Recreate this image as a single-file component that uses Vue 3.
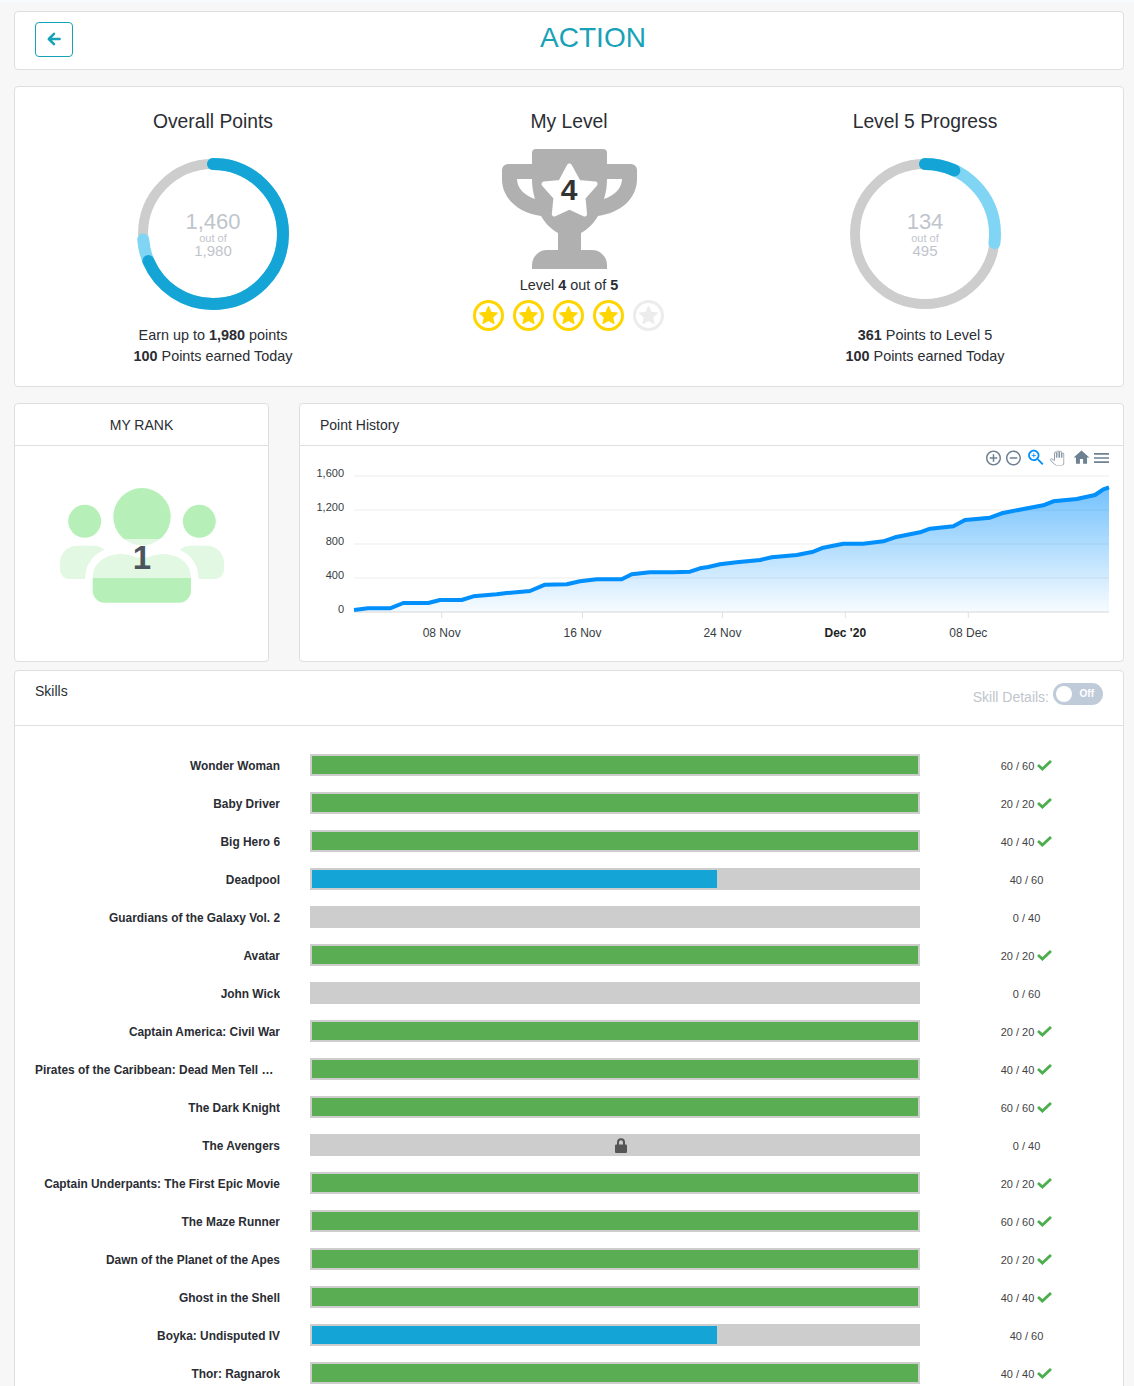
<script setup>
const zoomB = [[0,305],[30,295],[55,291],[90,283],[140,277],[210,270],[245,262],[320,255],[370,245],[400,233],[460,221],[520,221],[580,214],[615,202],[690,187],[720,176],[790,169],[825,150],[900,143],[935,130],[985,120],[1060,106],[1090,94],[1160,87],[1215,75],[1240,58],[1257,52]]
const first = [[354,610],[368,608.3],[390,608.3],[403.3,603],[428.3,603],[440,600],[461.7,600],[473.3,596.3],[496.7,594.3],[506.7,593],[530,591],[545,584.7],[566.7,584.3],[580,581.3],[596.7,579.3],[621.7,579.3],[631.7,574.3],[650,572.3],[673.3,572.3]]
const second = zoomB.map(([x, y]) => [+(690 + x / 3).toFixed(1), +(470 + y / 3).toFixed(1)])
const pts = [...first, ...second]
const linePath = 'M' + pts.map(p => p.join(',')).join(' L')
const areaPath = linePath + ' L1109,612 L354,612 Z'

const grid = [
  { y: 476, label: '1,600' },
  { y: 510, label: '1,200' },
  { y: 544, label: '800' },
  { y: 578, label: '400' },
  { y: 612, label: '0' }
]
const ticks = [
  { x: 441.7, label: '08 Nov' },
  { x: 582.5, label: '16 Nov' },
  { x: 722.4, label: '24 Nov' },
  { x: 845.3, label: "Dec '20", bold: true },
  { x: 968.3, label: '08 Dec' }
]
const rings = [
  { title: 'Overall Points', value: '1,460', total: '1,980', light: 73.7, dark: 68.7 },
  { title: 'Level 5 Progress', value: '134', total: '495', light: 27.1, dark: 6.9 }
]
const stars = [true, true, true, true, false]
const skills = [
  { name: 'Wonder Woman', score: '60 / 60', state: 'done' },
  { name: 'Baby Driver', score: '20 / 20', state: 'done' },
  { name: 'Big Hero 6', score: '40 / 40', state: 'done' },
  { name: 'Deadpool', score: '40 / 60', state: 'part' },
  { name: 'Guardians of the Galaxy Vol. 2', score: '0 / 40', state: 'none' },
  { name: 'Avatar', score: '20 / 20', state: 'done' },
  { name: 'John Wick', score: '0 / 60', state: 'none' },
  { name: 'Captain America: Civil War', score: '20 / 20', state: 'done' },
  { name: 'Pirates of the Caribbean: Dead Men Tell No Tales', score: '40 / 40', state: 'done' },
  { name: 'The Dark Knight', score: '60 / 60', state: 'done' },
  { name: 'The Avengers', score: '0 / 40', state: 'locked' },
  { name: 'Captain Underpants: The First Epic Movie', score: '20 / 20', state: 'done' },
  { name: 'The Maze Runner', score: '60 / 60', state: 'done' },
  { name: 'Dawn of the Planet of the Apes', score: '20 / 20', state: 'done' },
  { name: 'Ghost in the Shell', score: '40 / 40', state: 'done' },
  { name: 'Boyka: Undisputed IV', score: '40 / 60', state: 'part' },
  { name: 'Thor: Ragnarok', score: '40 / 40', state: 'done' }
]
</script>

<template>
  <div class="page">
    <section class="card top">
      <button class="back" type="button" aria-label="Back">
        <svg width="14" height="14" viewBox="0 0 14 14">
          <path d="M7 1.8 1.8 7 7 12.2M2 7h10.6" fill="none" stroke="#17a2b8" stroke-width="2.5" stroke-linejoin="round" stroke-linecap="round" />
        </svg>
      </button>
      <h1 class="page-title">ACTION</h1>
    </section>

    <section class="card overview">
      <div class="col">
        <h2 class="col-title">{{ rings[0].title }}</h2>
        <div class="ring">
          <svg width="160" height="160" viewBox="0 0 160 160">
            <circle cx="80" cy="80" r="70" class="ring-track" />
            <circle cx="80" cy="80" r="70" class="ring-arc light" pathLength="100" :stroke-dasharray="`${rings[0].light} 100`" transform="rotate(-90 80 80)" />
            <circle cx="80" cy="80" r="70" class="ring-arc dark" pathLength="100" :stroke-dasharray="`${rings[0].dark} 100`" transform="rotate(-90 80 80)" />
          </svg>
          <div class="ring-text">
            <span class="ring-val">{{ rings[0].value }}</span>
            <span class="ring-of">out of</span>
            <span class="ring-total">{{ rings[0].total }}</span>
          </div>
        </div>
        <p class="note">Earn up to <b>1,980</b> points<br /><b>100</b> Points earned Today</p>
      </div>

      <div class="col">
        <h2 class="col-title">My Level</h2>
        <div class="trophy">
          <svg width="135" height="120" viewBox="0 0 135 120">
            <path fill="#b0b0b0" fill-rule="evenodd" d="M34,0 H101 a4,4 0 0 1 4,4 V15 H129 a6,6 0 0 1 6,6 V30 C135,50 118,64 96,67 C92,74 86,80 79,84 V101 H90 a15,15 0 0 1 15,15 V120 H30 V116 a15,15 0 0 1 15,-15 H56 V84 C49,80 43,74 39,67 C17,64 0,50 0,30 V21 a6,6 0 0 1 6,-6 H30 V4 a4,4 0 0 1 4,-4 Z M15,30 H30 C30,37 31,44 33,50 C24,47 15,40 15,30 Z M120,30 H105 C105,37 104,44 102,50 C111,47 120,40 120,30 Z" />
            <polygon fill="#fff" stroke="#fff" stroke-width="5" stroke-linejoin="round" points="67.4,17 76.5,33.5 93,35 81,48.5 82.5,65 67.4,58 52.3,65 54,48.5 42,35 58.5,33.5" />
          </svg>
          <span class="trophy-num">4</span>
        </div>
        <p class="level-line">Level <b>4</b> out of <b>5</b></p>
        <div class="stars">
          <span v-for="(on, i) in stars" :key="i" class="star" :class="{ off: !on }">
            <svg width="21" height="21" viewBox="0 0 24 24">
              <path d="M12 17.27 18.18 21l-1.64-7.03L22 9.24l-7.19-.61L12 2 9.19 8.63 2 9.24l5.46 4.73L5.82 21z" fill="currentColor" stroke="currentColor" stroke-width="1.6" stroke-linejoin="round" />
            </svg>
          </span>
        </div>
      </div>

      <div class="col">
        <h2 class="col-title">{{ rings[1].title }}</h2>
        <div class="ring">
          <svg width="160" height="160" viewBox="0 0 160 160">
            <circle cx="80" cy="80" r="70" class="ring-track" />
            <circle cx="80" cy="80" r="70" class="ring-arc light" pathLength="100" :stroke-dasharray="`${rings[1].light} 100`" transform="rotate(-90 80 80)" />
            <circle cx="80" cy="80" r="70" class="ring-arc dark" pathLength="100" :stroke-dasharray="`${rings[1].dark} 100`" transform="rotate(-90 80 80)" />
          </svg>
          <div class="ring-text">
            <span class="ring-val">{{ rings[1].value }}</span>
            <span class="ring-of">out of</span>
            <span class="ring-total">{{ rings[1].total }}</span>
          </div>
        </div>
        <p class="note"><b>361</b> Points to Level 5<br /><b>100</b> Points earned Today</p>
      </div>
    </section>

    <div class="middle">
      <section class="card rank">
        <header class="rank-head">MY RANK</header>
        <div class="rank-body">
          <div class="rank-icon">
            <svg width="165" height="116" viewBox="0 0 165 116">
              <defs>
                <linearGradient id="fillLevel" gradientUnits="userSpaceOnUse" x1="0" y1="0" x2="0" y2="116">
                  <stop offset="0" stop-color="#b6f0b8" />
                  <stop offset="0.44" stop-color="#b6f0b8" />
                  <stop offset="0.44" stop-color="#e2f8e3" />
                  <stop offset="0.776" stop-color="#e2f8e3" />
                  <stop offset="0.776" stop-color="#b6f0b8" />
                  <stop offset="1" stop-color="#b6f0b8" />
                </linearGradient>
              </defs>
              <circle cx="24.7" cy="33.3" r="16.5" fill="#b6f0b8" />
              <circle cx="139.3" cy="33.3" r="16.5" fill="#b6f0b8" />
              <path fill="#e2f8e3" d="M17,57.7 H34 C38,57.7 41,59 44,61.5 V91 H9 a9,9 0 0 1 -9,-9 V74.7 a17,17 0 0 1 17,-17 Z" />
              <path fill="#e2f8e3" d="M147,57.7 H130 C126,57.7 123,59 120,61.5 V91 H155 a9,9 0 0 0 9,-9 V74.7 a17,17 0 0 0 -17,-17 Z" />
              <path fill="url(#fillLevel)" stroke="#fff" stroke-width="15" paint-order="stroke" d="M32.7,90 C32.7,75 45,66 62,66 C70,66 75,70 82,70 C89,70 94,66 102,66 C119,66 131,75 131,90 V102.7 a12,12 0 0 1 -12,12 H44.7 a12,12 0 0 1 -12,-12 Z" />
              <circle cx="82" cy="28.7" r="28.7" fill="url(#fillLevel)" />
            </svg>
            <span class="rank-num">1</span>
          </div>
        </div>
      </section>

      <section class="card history">
        <header class="history-head">Point History</header>
        <svg class="chart" width="823" height="215" viewBox="300 446 823 215">
          <defs>
            <linearGradient id="areaFill" x1="0" y1="0" x2="0" y2="1">
              <stop offset="0" stop-color="#008ffb" stop-opacity="0.55" />
              <stop offset="1" stop-color="#008ffb" stop-opacity="0.03" />
            </linearGradient>
          </defs>
          <g v-for="g in grid" :key="g.y">
            <line x1="354" x2="1109" :y1="g.y" :y2="g.y" stroke="#eeeeee" stroke-width="1.2" />
            <text x="344" :y="g.y + 1" text-anchor="end" class="axis-y">{{ g.label }}</text>
          </g>
          <line x1="354" x2="1109" y1="612" y2="612" stroke="#e0e0e0" />
          <g v-for="t in ticks" :key="t.label">
            <line :x1="t.x" :x2="t.x" y1="612" y2="618" stroke="#e0e0e0" />
            <text :x="t.x" y="637" text-anchor="middle" class="axis-x" :class="{ strong: t.bold }">{{ t.label }}</text>
          </g>
          <path :d="areaPath" fill="url(#areaFill)" />
          <path :d="linePath" fill="none" stroke="#008ffb" stroke-width="4" stroke-linejoin="round" />

          <svg x="984.5" y="449" width="18" height="18" viewBox="0 0 24 24" fill="#6e8192">
            <path d="M13 7h-2v4H7v2h4v4h2v-4h4v-2h-4V7zm-1-5C6.48 2 2 6.48 2 12s4.48 10 10 10 10-4.48 10-10S17.52 2 12 2zm0 18c-4.41 0-8-3.59-8-8s3.59-8 8-8 8 3.59 8 8-3.59 8-8 8z" />
          </svg>
          <svg x="1004.5" y="449" width="18" height="18" viewBox="0 0 24 24" fill="#6e8192">
            <path d="M7 11v2h10v-2H7zm5-9C6.48 2 2 6.48 2 12s4.48 10 10 10 10-4.48 10-10S17.52 2 12 2zm0 18c-4.41 0-8-3.59-8-8s3.59-8 8-8 8 3.59 8 8-3.59 8-8 8z" />
          </svg>
          <svg x="1025.5" y="447" width="21" height="21" viewBox="0 0 24 24" fill="#008ffb">
            <path d="M15.5 14h-.79l-.28-.27C15.41 12.59 16 11.11 16 9.5 16 5.91 13.09 3 9.5 3S3 5.91 3 9.5 5.91 16 9.5 16c1.61 0 3.09-.59 4.23-1.57l.27.28v.79l5 4.99L20.49 19l-4.99-5zm-6 0C7.01 14 5 11.99 5 9.5S7.01 5 9.5 5 14 7.01 14 9.5 11.99 14 9.5 14z" />
            <path d="M12 10h-2v2H9v-2H7V9h2V7h1v2h2v1z" />
          </svg>
          <svg x="1049.5" y="450.5" width="15" height="15" viewBox="0 0 24 24" fill="#fff" stroke="#6e8192" stroke-width="1.2">
            <path d="M23 5.5V20c0 2.2-1.8 4-4 4h-7.3c-1.08 0-2.1-.43-2.85-1.19L1 14.83s1.26-1.23 1.3-1.25c.22-.19.49-.29.79-.29.22 0 .42.06.6.16.04.01 4.31 2.46 4.31 2.46V4c0-.83.67-1.5 1.5-1.5S11 3.17 11 4v7h1V1.5c0-.83.67-1.5 1.5-1.5S15 .67 15 1.5V11h1V2.5c0-.83.67-1.5 1.5-1.5s1.5.67 1.5 1.5V11h1V5.5c0-.83.67-1.5 1.5-1.5s1.5.67 1.5 1.5z" />
          </svg>
          <svg x="1072" y="448" width="19" height="19" viewBox="0 0 24 24" fill="#6e8192">
            <path d="M10 20v-6h4v6h5v-8h3L12 3 2 12h3v8z" />
          </svg>
          <svg x="1091.5" y="448" width="20" height="20" viewBox="0 0 24 24" fill="#6e8192">
            <path d="M3 18h18v-2H3v2zm0-5h18v-2H3v2zm0-7v2h18V6H3z" />
          </svg>
        </svg>
      </section>
    </div>

    <section class="card skills">
      <header class="skills-head">
        <span class="skills-title">Skills</span>
        <div class="details">
          <span class="details-label">Skill Details:</span>
          <span class="toggle"><i class="knob"></i><em>Off</em></span>
        </div>
      </header>
      <div class="skills-body">
        <div v-for="s in skills" :key="s.name" class="row">
          <div class="row-name">{{ s.name }}</div>
          <div class="bar" :class="{ locked: s.state === 'locked' }">
            <div v-if="s.state === 'done'" class="fill done"></div>
            <div v-else-if="s.state === 'part'" class="fill part"></div>
            <svg v-else-if="s.state === 'locked'" width="12" height="15" viewBox="0 0 12 15">
              <path d="M3 7V4.2a3 3 0 0 1 6 0V7" fill="none" stroke="#555" stroke-width="2" />
              <rect x="0" y="6.5" width="12" height="8.5" rx="1" fill="#555" />
            </svg>
          </div>
          <div class="row-score">
            <span class="score-text">{{ s.score }}</span>
            <svg v-if="s.state === 'done'" width="15" height="11" viewBox="0 0 15 11">
              <path d="M1 5 5.4 9 14 1" fill="none" stroke="#4cae4f" stroke-width="2.8" />
            </svg>
          </div>
        </div>
      </div>
    </section>
  </div>
</template>

<style>
html, body { margin: 0; background: #f7f7f7; }
#app { height: 1386px; overflow: hidden; }
</style>

<style scoped>
.page {
  box-sizing: border-box;
  padding: 8px 10px 0 14px;
  background: #f7f7f7;
  border-top: 3px solid #f8f9fc;
  font-family: "Liberation Sans", Arial, sans-serif;
  font-size: 14px;
  color: #2a2d33;
}
.card {
  box-sizing: border-box;
  background: #fff;
  border: 1px solid #dfdfdf;
  border-radius: 4px;
}
.top {
  display: flex;
  align-items: flex-start;
  height: 59px;
  padding: 10px 10px 0 20px;
}
.back {
  box-sizing: border-box;
  width: 38px;
  height: 35px;
  padding: 0 0 2px;
  display: flex;
  align-items: center;
  justify-content: center;
  background: #fff;
  border: 1px solid #17a2b8;
  border-radius: 4px;
}
.page-title {
  flex: 1;
  margin: 0;
  text-align: center;
  font-size: 28px;
  font-weight: 400;
  line-height: 32px;
  color: #17a2b8;
}
.overview {
  display: grid;
  grid-template-columns: repeat(3, 1fr);
  height: 301px;
  margin-top: 16px;
  padding: 23px 20px 0;
}
.col {
  display: flex;
  flex-direction: column;
  align-items: center;
}
.col-title {
  margin: 0;
  font-size: 19.3px;
  font-weight: 400;
  line-height: 24px;
}
.ring {
  position: relative;
  width: 160px;
  height: 160px;
  margin-top: 20px;
}
.ring svg { display: block; }
.ring-track {
  fill: none;
  stroke: #cdcdcd;
  stroke-width: 10;
}
.ring-arc {
  fill: none;
  stroke-width: 12;
  stroke-linecap: round;
}
.ring-arc.light { stroke: #80d5f4; }
.ring-arc.dark { stroke: #14a5d6; }
.ring-text {
  position: absolute;
  inset: 0;
  padding-top: 1px;
  display: flex;
  flex-direction: column;
  align-items: center;
  justify-content: center;
  color: #bfc5cc;
}
.ring-val { font-size: 22px; line-height: 22px; }
.ring-of { font-size: 11px; line-height: 11px; }
.ring-total { font-size: 15px; line-height: 14px; }
.note {
  margin: 11px 0 0;
  text-align: center;
  font-size: 14.4px;
  line-height: 21px;
}
.trophy {
  position: relative;
  width: 135px;
  height: 120px;
  margin-top: 15px;
}
.trophy svg { display: block; }
.trophy-num {
  position: absolute;
  top: 23px;
  left: 0;
  right: 0;
  text-align: center;
  font-size: 30px;
  line-height: 36px;
  font-weight: 700;
  color: #333;
}
.level-line {
  margin: 6px 0 0;
  font-size: 14.4px;
  line-height: 21px;
}
.stars {
  display: flex;
  gap: 9px;
  margin: 4px 1px 0 0;
}
.star {
  box-sizing: border-box;
  width: 31px;
  height: 31px;
  display: flex;
  align-items: center;
  justify-content: center;
  border: 3px solid #ffd500;
  border-radius: 50%;
  color: #ffd500;
}
.star.off {
  border-color: #ececec;
  color: #ececec;
}
.middle {
  display: flex;
  gap: 30px;
  margin-top: 16px;
}
.rank {
  width: 255px;
  height: 259px;
}
.rank-head {
  height: 41px;
  line-height: 42px;
  text-align: center;
  border-bottom: 1px solid #dfdfdf;
}
.rank-body {
  display: flex;
  justify-content: center;
  padding-top: 42px;
}
.rank-icon {
  position: relative;
  width: 165px;
  height: 116px;
  margin-left: 2px;
}
.rank-icon svg { display: block; }
.rank-num {
  position: absolute;
  left: 0;
  right: 1px;
  top: 52px;
  text-align: center;
  font-size: 33px;
  line-height: 36px;
  font-weight: 700;
  color: #4a5560;
}
.history {
  flex: 1;
  height: 259px;
}
.history-head {
  height: 41px;
  padding-left: 20px;
  line-height: 42px;
  border-bottom: 1px solid #dfdfdf;
}
.chart { display: block; }
.axis-y {
  font-family: "Liberation Sans", Arial, sans-serif;
  font-size: 11px;
  fill: #373d3f;
}
.axis-x {
  font-family: "Liberation Sans", Arial, sans-serif;
  font-size: 12px;
  fill: #373d3f;
}
.axis-x.strong {
  font-weight: 700;
  fill: #222;
}
.skills { margin-top: 8px; }
.skills-head {
  display: flex;
  justify-content: space-between;
  align-items: flex-start;
  height: 54px;
  padding: 0 20px;
  border-bottom: 1px solid #dfdfdf;
}
.skills-title {
  margin-top: 12px;
  line-height: 16px;
}
.details {
  display: flex;
  align-items: flex-start;
  margin-top: 12px;
}
.details-label {
  margin-top: 6px;
  margin-right: 4px;
  line-height: 17px;
  color: #c0c5cc;
}
.toggle {
  position: relative;
  display: block;
  width: 50px;
  height: 22px;
  border-radius: 11px;
  background: #bfcbd9;
}
.knob {
  position: absolute;
  left: 3px;
  top: 3px;
  width: 16px;
  height: 16px;
  border-radius: 50%;
  background: #fff;
}
.toggle em {
  position: absolute;
  right: 9px;
  top: 0;
  font-style: normal;
  font-weight: 700;
  font-size: 10px;
  line-height: 22px;
  color: #fff;
}
.skills-body { padding: 28px 0 0 20px; }
.row {
  display: flex;
  align-items: center;
  height: 22px;
  margin-bottom: 16px;
}
.row-name {
  box-sizing: border-box;
  width: 245px;
  margin-right: 30px;
  padding-top: 2px;
  overflow: hidden;
  white-space: nowrap;
  text-overflow: ellipsis;
  text-align: right;
  font-size: 11.9px;
  font-weight: 700;
  line-height: 22px;
}
.bar {
  box-sizing: border-box;
  width: 610px;
  height: 22px;
  border: 2px solid #cdcdcd;
  background: #cdcdcd;
}
.bar.locked {
  display: flex;
  align-items: center;
  justify-content: center;
  padding-left: 12px;
}
.fill { height: 100%; }
.fill.done {
  width: 100%;
  background: #5aad52;
}
.fill.part {
  width: 66.8%;
  background: #14a5d6;
}
.row-score {
  display: flex;
  flex: 1;
  align-items: center;
  justify-content: center;
  gap: 3px;
  margin-left: 10px;
  font-size: 11px;
  line-height: 22px;
  color: #444;
}
.score-text { padding-top: 2px; }
</style>
